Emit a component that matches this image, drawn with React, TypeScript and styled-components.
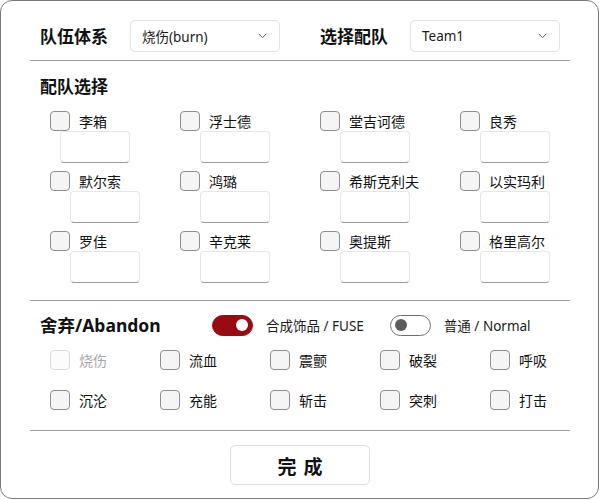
import React from "react";
import styled, { createGlobalStyle } from "styled-components";

const Global = createGlobalStyle`
  html, body { margin: 0; padding: 0; background: #ffffff; }
  body { font-family: "Noto Sans", "Noto Sans CJK SC", sans-serif; color: #111; }
  * { box-sizing: border-box; }
`;

const Window = styled.div`
  width: 599px;
  height: 499px;
  border: 1px solid #7a7a7a;
  border-radius: 12px;
  background: #fff;
  padding: 19px 28px 0 29px;
  display: flex;
  flex-direction: column;
`;

const HeaderRow = styled.div`
  display: flex;
  align-items: center;
  height: 32px;
  padding-left: 10px;
`;

const FieldTitle = styled.div<{ $gap?: number }>`
  width: 90px;
  margin-left: ${(p) => p.$gap ?? 0}px;
  font-size: 17px;
  font-weight: 700;
  line-height: 24px;
  font-family: "Noto Sans CJK SC", sans-serif;
`;

const Select = styled.div`
  width: 150px;
  height: 32px;
  border: 1px solid #e3e3e3;
  border-radius: 5px;
  background: #fff;
  display: flex;
  align-items: center;
  justify-content: space-between;
  padding: 0 12px 0 11px;
  font-size: 13.5px;
  color: #1b1b1b;
`;

const Divider = styled.div<{ $top: number }>`
  height: 1px;
  background: #9c9c9c;
  margin-top: ${(p) => p.$top}px;
  flex-shrink: 0;
`;

const SectionTitle = styled.div`
  margin-top: 13px;
  padding-left: 10px;
  font-size: 17px;
  font-weight: 700;
  line-height: 24px;
  font-family: "Noto Sans CJK SC", sans-serif;
`;

const TeamGrid = styled.div`
  margin-top: 13px;
  padding-left: 20px;
  display: grid;
  grid-template-columns: 130px 140px 140px 1fr;
  row-gap: 8px;
`;

const MemberCell = styled.div`
  display: flex;
  flex-direction: column;
`;

const CheckRow = styled.label<{ $disabled?: boolean }>`
  display: flex;
  align-items: center;
  gap: 9px;
  height: 20px;
  font-size: 14px;
  line-height: 20px;
  color: ${(p) => (p.$disabled ? "#a8a8a8" : "#111")};
  font-family: "Noto Sans CJK SC", sans-serif;
  white-space: nowrap;
`;

const Box = styled.span<{ $disabled?: boolean }>`
  width: 20px;
  height: 20px;
  flex-shrink: 0;
  border-radius: 4px;
  border: 1px solid ${(p) => (p.$disabled ? "#d9d9d9" : "#8e8e8e")};
  background: ${(p) => (p.$disabled ? "#fcfcfc" : "#f5f5f5")};
`;

const NameInput = styled.input<{ $indent: number }>`
  width: 70px;
  height: 32px;
  margin: 0 0 0 ${(p) => p.$indent}px;
  border: 1px solid #e6e6e6;
  border-bottom-color: #9a9a9a;
  border-radius: 4px;
  background: #fff;
  padding: 0 6px;
  font-size: 13px;
  outline: none;
`;

const AbandonHeader = styled.div`
  margin-top: 12px;
  padding-left: 10px;
  height: 24px;
  display: flex;
  align-items: center;
`;

const AbandonTitle = styled.div`
  width: 172px;
  font-size: 17.5px;
  font-weight: 700;
  line-height: 24px;
  font-family: "Noto Sans", "Noto Sans CJK SC", sans-serif;
`;

const ToggleGroup = styled.div<{ $gap?: number }>`
  display: flex;
  align-items: center;
  gap: 13px;
  margin-left: ${(p) => p.$gap ?? 0}px;
  font-size: 13.5px;
  color: #1b1b1b;
`;

const Toggle = styled.span<{ $on: boolean }>`
  width: 41px;
  height: 21px;
  border-radius: 11px;
  display: flex;
  align-items: center;
  justify-content: ${(p) => (p.$on ? "flex-end" : "flex-start")};
  padding: 0 4px;
  background: ${(p) => (p.$on ? "#990b11" : "#fff")};
  border: 1px solid ${(p) => (p.$on ? "#990b11" : "#6e6e6e")};
`;

const Knob = styled.span<{ $on: boolean }>`
  width: 12px;
  height: 12px;
  border-radius: 50%;
  background: ${(p) => (p.$on ? "#fff" : "#5c5c5c")};
`;

const AbandonGrid = styled.div`
  margin-top: 13px;
  padding-left: 20px;
  display: grid;
  grid-template-columns: repeat(5, 110px);
  row-gap: 20px;
`;

const Footer = styled.div`
  display: flex;
  justify-content: center;
  margin-top: 14px;
`;

const DoneButton = styled.button`
  width: 140px;
  height: 40px;
  border: 1px solid #dedede;
  border-radius: 5px;
  background: #fff;
  font-family: "Noto Sans CJK SC", sans-serif;
  font-size: 19px;
  font-weight: 700;
  letter-spacing: 7px;
  padding: 0 0 0 7px;
  color: #111;
  cursor: pointer;
`;

const Chevron = () => (
  <svg width="9" height="6" viewBox="0 0 9 6" fill="none">
    <path d="M0.8 1 L4.5 4.6 L8.2 1" stroke="#5a5a5a" strokeWidth="1" />
  </svg>
);

const members = [
  "李箱", "浮士德", "堂吉诃德", "良秀",
  "默尔索", "鸿璐", "希斯克利夫", "以实玛利",
  "罗佳", "辛克莱", "奥提斯", "格里高尔",
];

const statuses = ["烧伤", "流血", "震颤", "破裂", "呼吸", "沉沦", "充能", "斩击", "突刺", "打击"];

export default function App() {
  return (
    <>
      <Global />
      <Window>
        <HeaderRow>
          <FieldTitle>队伍体系</FieldTitle>
          <Select>
            <span>烧伤(burn)</span>
            <Chevron />
          </Select>
          <FieldTitle $gap={40}>选择配队</FieldTitle>
          <Select>
            <span>Team1</span>
            <Chevron />
          </Select>
        </HeaderRow>
        <Divider $top={8} />
        <SectionTitle>配队选择</SectionTitle>
        <TeamGrid>
          {members.map((m, i) => (
            <MemberCell key={m}>
              <CheckRow>
                <Box />
                {m}
              </CheckRow>
              <NameInput $indent={i === 0 ? 10 : 20} />
            </MemberCell>
          ))}
        </TeamGrid>
        <Divider $top={17} />
        <AbandonHeader>
          <AbandonTitle>舍弃/Abandon</AbandonTitle>
          <ToggleGroup>
            <Toggle $on>
              <Knob $on />
            </Toggle>
            合成饰品 / FUSE
          </ToggleGroup>
          <ToggleGroup $gap={26}>
            <Toggle $on={false}>
              <Knob $on={false} />
            </Toggle>
            普通 / Normal
          </ToggleGroup>
        </AbandonHeader>
        <AbandonGrid>
          {statuses.map((s, i) => (
            <CheckRow key={s} $disabled={i === 0}>
              <Box $disabled={i === 0} />
              {s}
            </CheckRow>
          ))}
        </AbandonGrid>
        <Divider $top={20} />
        <Footer>
          <DoneButton>完成</DoneButton>
        </Footer>
      </Window>
    </>
  );
}
